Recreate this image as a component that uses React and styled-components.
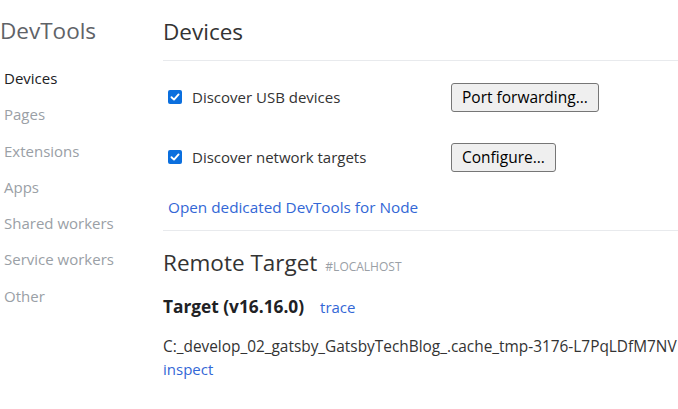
import React from "react";
import styled, { createGlobalStyle } from "styled-components";

const Global = createGlobalStyle`
  html, body { margin: 0; padding: 0; background: #fff; }
  body { font-family: "Segoe UI", "Open Sans", "Noto Sans", sans-serif; overflow: hidden; }
`;

const Page = styled.div`
  display: flex;
  width: 678px;
  height: 409px;
  overflow: hidden;
`;

const Sidebar = styled.nav`
  width: 163px;
  flex: none;
  display: flex;
  flex-direction: column;
`;

const Brand = styled.h1`
  margin: 0;
  height: 66px;
  line-height: 62px;
  font-size: 22.5px;
  font-weight: 400;
  color: #5f6368;
`;

const NavItem = styled.div`
  height: 36.3px;
  line-height: 24px;
  font-size: 15px;
  padding-left: 4px;
  color: ${(p) => (p.$active ? "#202124" : "#9aa0a6")};
`;

const Main = styled.main`
  flex: 1;
  min-width: 0;
  display: flex;
  flex-direction: column;
`;

const Heading = styled.h2`
  margin: 0;
  font-size: 22.5px;
  font-weight: 400;
  color: #333;
  display: flex;
  align-items: baseline;
  gap: 8px;
  padding-top: ${(p) => p.$pt}px;
  height: ${(p) => p.$h}px;
  line-height: ${(p) => p.$h}px;
`;

const Tag = styled.span`
  font-size: 12px;
  color: #9aa0a6;
  text-transform: uppercase;
`;

const Rule = styled.hr`
  margin: 0;
  border: none;
  border-top: 1px solid #e8eaed;
`;

const Options = styled.div`
  padding: 6px 0 0 5px;
  display: flex;
  flex-direction: column;
`;

const OptionRow = styled.div`
  display: grid;
  grid-template-columns: 283px auto;
  align-items: center;
  height: 60px;
`;

const CheckLabel = styled.label`
  display: flex;
  align-items: center;
  gap: 10px;
  font-size: 15px;
  color: #333;
`;

const Box = styled.span`
  width: 14px;
  height: 14px;
  border-radius: 2px;
  background: #0b6fde;
  display: inline-flex;
  align-items: center;
  justify-content: center;
`;

const Button = styled.button`
  justify-self: start;
  height: 29px;
  padding: 0 10px;
  font-family: inherit;
  font-size: 15.5px;
  color: #000;
  background: #efefef;
  border: 1px solid #767676;
  border-radius: 3px;
`;

const Link = styled.a`
  color: #3367d6;
  text-decoration: none;
  font-size: ${(p) => p.$size || 15}px;
`;

const NodeLink = styled.div`
  height: 40px;
  line-height: 40px;
  padding-bottom: 3px;
`;

const Remote = styled.section`
  padding-top: 12px;
  display: flex;
  flex-direction: column;
`;

const TargetTitle = styled.div`
  display: flex;
  align-items: baseline;
  gap: 16px;
  height: 30px;
  line-height: 30px;
  margin-top: 9px;
`;

const Bold = styled.span`
  font-weight: 700;
  font-size: 17.3px;
  color: #202124;
`;

const PathText = styled.div`
  margin-top: 14px;
  font-size: 15.4px;
  color: #333;
  white-space: nowrap;
  line-height: 22px;
`;

const Inspect = styled.div`
  line-height: 22px;
`;

const Check = () => (
  <Box>
    <svg width="10" height="10" viewBox="0 0 10 10">
      <path d="M1.5 5.2 L4 7.6 L8.6 2.4" fill="none" stroke="#fff" strokeWidth="1.9" strokeLinecap="round" strokeLinejoin="round" />
    </svg>
  </Box>
);

export default function App() {
  const nav = ["Devices", "Pages", "Extensions", "Apps", "Shared workers", "Service workers", "Other"];
  return (
    <>
      <Global />
      <Page>
        <Sidebar>
          <Brand>DevTools</Brand>
          {nav.map((n, i) => (
            <NavItem key={n} $active={i === 0}>{n}</NavItem>
          ))}
        </Sidebar>
        <Main>
          <Heading $pt={4} $h={56}>Devices</Heading>
          <Rule />
          <Options>
            <OptionRow>
              <CheckLabel><Check />Discover USB devices</CheckLabel>
              <Button>Port forwarding...</Button>
            </OptionRow>
            <OptionRow>
              <CheckLabel><Check />Discover network targets</CheckLabel>
              <Button>Configure...</Button>
            </OptionRow>
            <NodeLink><Link href="#" $size={15.3}>Open dedicated DevTools for Node</Link></NodeLink>
          </Options>
          <Rule />
          <Remote>
            <Heading $pt={0} $h={40}>Remote Target <Tag>#localhost</Tag></Heading>
            <TargetTitle>
              <Bold>Target (v16.16.0)</Bold>
              <Link href="#">trace</Link>
            </TargetTitle>
            <PathText>C:_develop_02_gatsby_GatsbyTechBlog_.cache_tmp-3176-L7PqLDfM7NV</PathText>
            <Inspect><Link href="#">inspect</Link></Inspect>
          </Remote>
        </Main>
      </Page>
    </>
  );
}
